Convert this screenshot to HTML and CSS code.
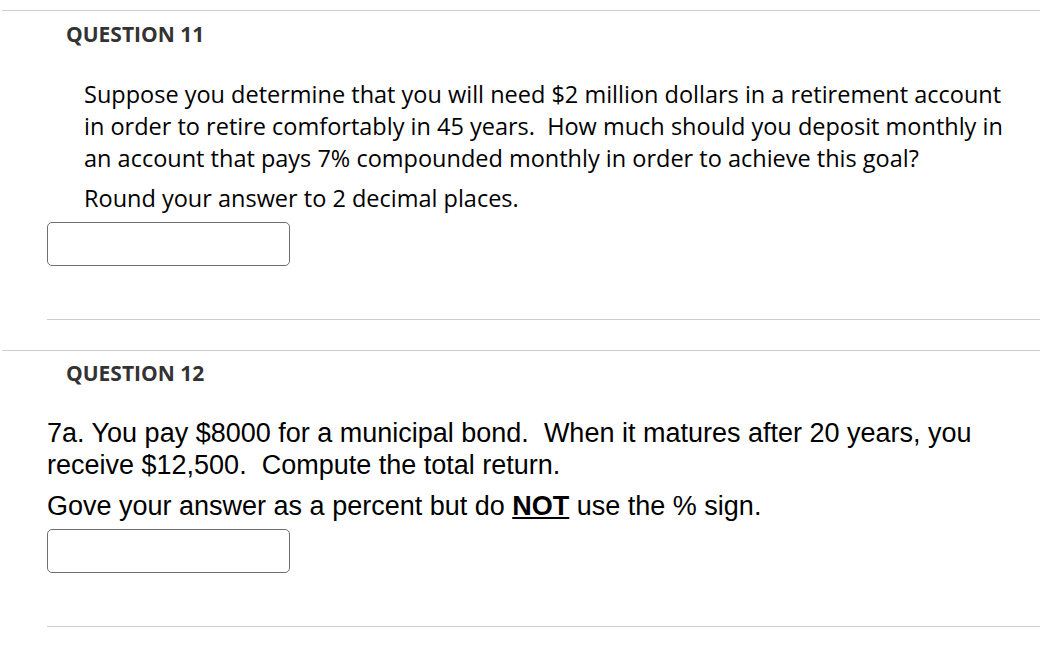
FILE: index.html
```html
<!DOCTYPE html>
<html>
<head>
<meta charset="utf-8">
<link rel="stylesheet" href="styles.css">
</head>
<body>
<section class="question q11">
  <h2 class="q-title">QUESTION 11</h2>
  <div class="q-body">
    <div class="q-text open">
      <p class="indent">Suppose you determine that you will need $2 million dollars in a retirement account in order to retire comfortably in 45 years.&nbsp; How much should you deposit monthly in an account that pays 7% compounded monthly in order to achieve this goal?</p>
      <p class="indent round">Round your answer to 2 decimal places.</p>
    </div>
    <input class="answer" type="text">
    <div class="q-end"></div>
  </div>
</section>
<section class="question q12">
  <h2 class="q-title">QUESTION 12</h2>
  <div class="q-body">
    <div class="q-text arial">
      <p>7a. You pay $8000 for a municipal bond.&nbsp; When it matures after 20 years, you receive $12,500.&nbsp; Compute the total return.</p>
      <p class="gove">Gove your answer as a percent but do <b><u>NOT</u></b> use the % sign.</p>
    </div>
    <input class="answer" type="text">
    <div class="q-end"></div>
  </div>
</section>
</body>
</html>
```
FILE: styles.css
```css
html, body {
  margin: 0;
  padding: 0;
  background: #fff;
}
body {
  padding-top: 10px;
  padding-left: 2px;
}
.question {
  border-top: 1px solid #cdcdcd;
}
.q12 {
  margin-top: 30px;
}
.q-title {
  margin: 0;
  padding: 10px 0 0 64px;
  font-family: "Open Sans", sans-serif;
  font-weight: 700;
  font-size: 21px;
  line-height: 26px;
  color: #333;
}
.q12 .q-title {
  padding-top: 9px;
}
.q-body {
  padding-left: 45px;
}
.q-text p {
  margin: 0;
}
.open {
  font-family: "Open Sans", sans-serif;
  font-size: 23.5px;
  line-height: 32px;
  color: #000;
  padding-top: 31px;
  width: 968px;
}
.indent {
  padding-left: 37px;
}
.round {
  margin-top: 8px !important;
}
.arial {
  font-family: "Liberation Sans", Arial, sans-serif;
  font-size: 27px;
  line-height: 32px;
  color: #000;
  padding-top: 31px;
  width: 960px;
}
.gove {
  margin-top: 9px !important;
}
.answer {
  display: block;
  box-sizing: border-box;
  width: 243px;
  height: 44px;
  margin-top: 8px;
  border: 1px solid #6f6f6f;
  border-radius: 5px;
  background: #fff;
  outline: none;
}
.q12 .answer {
  margin-top: 7px;
}
.q-end {
  margin-top: 53px;
  border-top: 1px solid #cdcdcd;
}
```
